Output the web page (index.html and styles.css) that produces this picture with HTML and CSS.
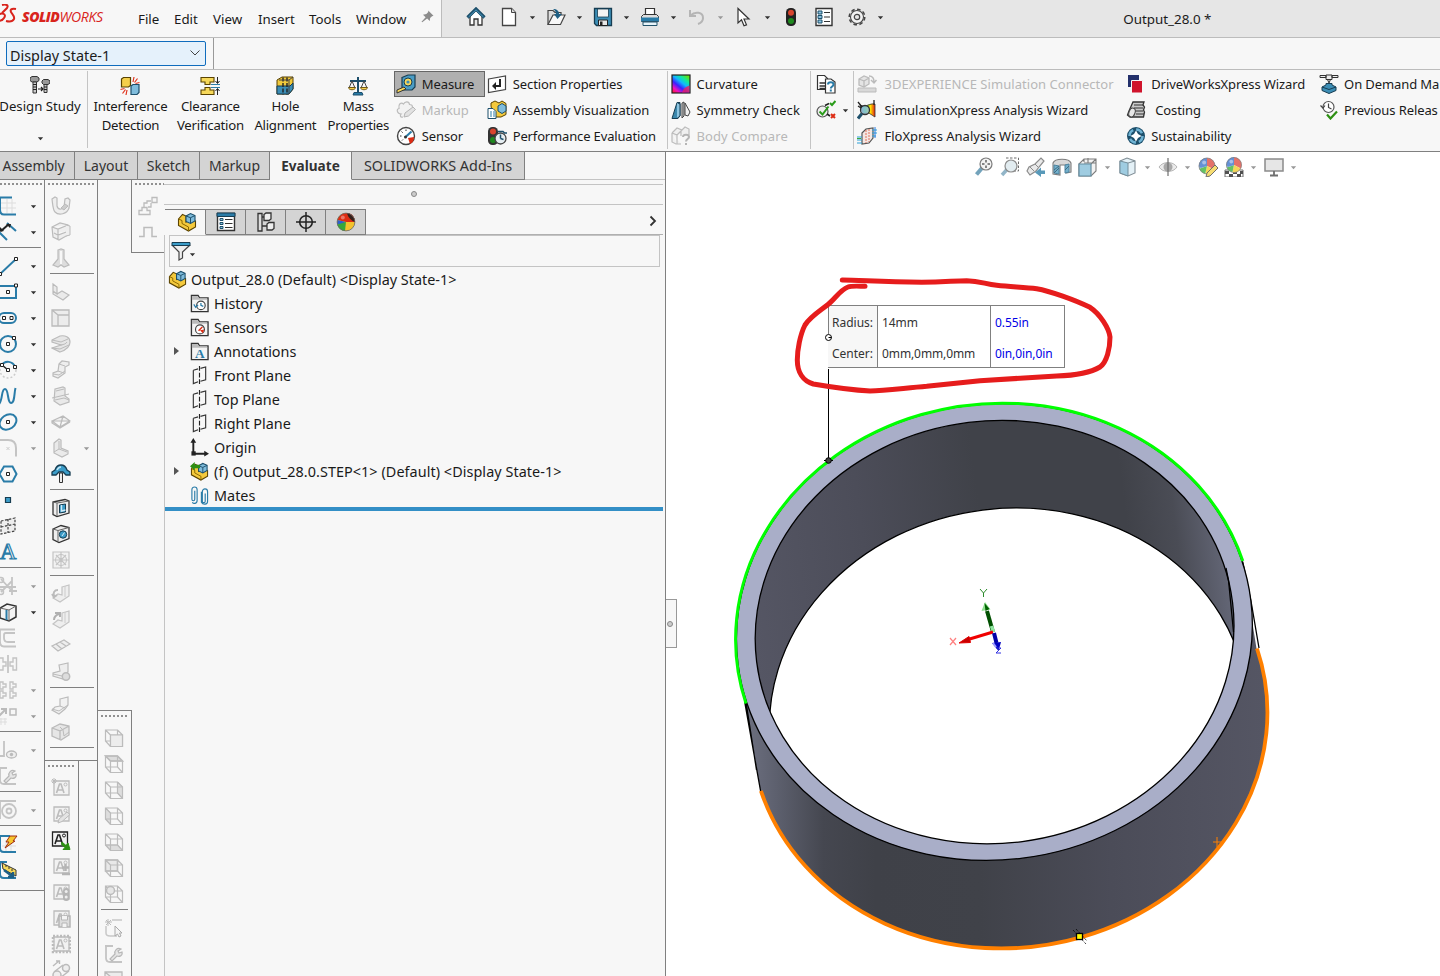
FILE: index.html
```html
<!DOCTYPE html>
<html lang="en">
<head>
<meta charset="utf-8">
<title>SOLIDWORKS - Output_28.0</title>
<link rel="stylesheet" href="styles.css">
</head>
<body>
<svg class="defs" width="0" height="0" aria-hidden="true">
<defs>
<linearGradient id="wallOut" gradientUnits="userSpaceOnUse" x1="745" y1="0" x2="1268" y2="0"><stop offset="0" stop-color="#6d7080"/><stop offset=".06" stop-color="#5d606e"/><stop offset=".15" stop-color="#454750"/><stop offset=".25" stop-color="#3f4148"/><stop offset=".45" stop-color="#404249"/><stop offset=".7" stop-color="#4b4c58"/><stop offset="1" stop-color="#555664"/></linearGradient>
<linearGradient id="wallIn" gradientUnits="userSpaceOnUse" x1="755" y1="0" x2="1235" y2="0"><stop offset="0" stop-color="#555664"/><stop offset=".25" stop-color="#4c4d59"/><stop offset=".5" stop-color="#404249"/><stop offset=".8" stop-color="#404249"/><stop offset=".9" stop-color="#4a4c55"/><stop offset="1" stop-color="#646777"/></linearGradient>
<linearGradient id="hue" x1="0" y1="1" x2=".8" y2="0"><stop offset="0" stop-color="#ff2010"/><stop offset=".22" stop-color="#f010c0"/><stop offset=".42" stop-color="#3a20ff"/><stop offset=".62" stop-color="#10b8ff"/><stop offset=".8" stop-color="#10e8a0"/><stop offset="1" stop-color="#60e010"/></linearGradient>
<linearGradient id="rain" x1="0" y1="0" x2="1" y2="0"><stop offset="0" stop-color="#2b50e0"/><stop offset=".35" stop-color="#20c040"/><stop offset=".7" stop-color="#ffe000"/><stop offset="1" stop-color="#e02010"/></linearGradient>
<clipPath id="bore"><ellipse cx="994.600" cy="632.100" rx="239.800" ry="211.300" transform="rotate(-7.100 994.600 632.100)"/></clipPath>
<symbol id="home" viewBox="0 0 20 20"><path d="M4 9v9h4v-6h4v6h4V9l-6-6z" fill="#fff" stroke="#333" stroke-width="1.3"/><path d="M1.5 10.5 10 2l8.5 8.500" fill="none" stroke="#1d4f6b" stroke-width="3.200"/><path d="M2.500 10 10 2.800l7.500 7.200" fill="none" stroke="#4a9cc4" stroke-width="1"/></symbol>
<symbol id="doc" viewBox="0 0 20 20"><path d="M3.500 1.500h9l4 4v13h-13z" fill="#fff" stroke="#444" stroke-width="1.300"/><path d="M12.500 1.500v4h4" fill="#ddd" stroke="#444"/></symbol>
<symbol id="open" viewBox="0 0 20 20"><path d="M2 17.500V3.500h5l2 2h6v4" fill="#ddd" stroke="#444" stroke-width="1.200"/><path d="M2 17.500 7 8h12l-4.500 9.500z" fill="#f8f8f8" stroke="#444" stroke-width="1.200"/><path d="M7 2c4 0 6 2 6 5h3l-4.500 5L8 7h2c0-2-1-4-3-5z" fill="#1f5f83"/></symbol>
<symbol id="save" viewBox="0 0 20 20"><path d="M1.500 1.500h17v17h-15l-2-2z" fill="#3b8db5" stroke="#173d52" stroke-width="1.300"/><path d="M4.500 2h11v8h-11z" fill="#f3f3f3" stroke="#173d52" stroke-width=".8"/><path d="M5.500 13h9v5.500h-9z" fill="#e8e8e8" stroke="#222"/><path d="M7 14.500h2.500v4H7z" fill="#222"/></symbol>
<symbol id="print" viewBox="0 0 20 20"><path d="M5.500 8V1.500h9V8" fill="#fff" stroke="#333" stroke-width="1.200"/><path d="M1.500 9.500l2-2h13l2 2v5h-17z" fill="#ddd" stroke="#333"/><path d="M1 10.500h18v4H1z" fill="#2a7ca8"/><path d="M3 15h14v3.500H3z" fill="#e8f4fa" stroke="#23536b"/></symbol>
<symbol id="undo" viewBox="0 0 20 20"><path d="M3 3v6h6M3.500 8.500C8 4 16 5 16 11c0 3-2 5-5 6" fill="none" stroke="#b5b5b5" stroke-width="2"/></symbol>
<symbol id="cursor" viewBox="0 0 20 20"><path d="M4 1.500v14.500l3.500-3.200 2.500 6 2.500-1-2.500-5.800h5z" fill="#fff" stroke="#333" stroke-width="1.200"/></symbol>
<symbol id="light" viewBox="0 0 20 20"><rect x="5" y="1" width="10" height="18" rx="4.500" fill="#222"/><circle cx="10" cy="5.800" r="3" fill="#d8442e"/><circle cx="10" cy="14" r="3" fill="#1e8a1e"/></symbol>
<symbol id="list" viewBox="0 0 20 20"><path d="M2 1.500h16v17H2z" fill="#fff" stroke="#333" stroke-width="1.400"/><path d="M4 4h4v3H4zM4 8.500h4v3H4zM4 13h4v3H4z" fill="#8cc4e0" stroke="#1d4f6b"/><path d="M10 5.500h6M10 10h6M10 14.500h6" stroke="#333" stroke-width="1.200"/></symbol>
<symbol id="props" viewBox="0 0 20 20"><path d="M1.500 1.500h17v17h-17z" fill="#fff" stroke="#333" stroke-width="1.400"/><path d="M1 1h18v3.500H1z" fill="#2a7ca8" stroke="#173d52"/><path d="M4 6.500h3v2H4zM4 10.500h3v2H4zM4 14.500h3v2H4z" fill="#8cc4e0" stroke="#1d4f6b"/><path d="M9 7.500h7.500M9 11.500h7.500M9 15.500h7.500" stroke="#333" stroke-width="1.200"/></symbol>
<symbol id="gear" viewBox="0 0 20 20"><circle cx="10" cy="10" r="7.800" fill="none" stroke="#444" stroke-width="1.500" stroke-dasharray="3.600 2.500"/><circle cx="10" cy="10" r="6.500" fill="#f2f2f2" stroke="#444" stroke-width="1.100"/><circle cx="10" cy="10" r="2.700" fill="#e6e6e6" stroke="#444" stroke-width="1.200"/></symbol>
<symbol id="pin" viewBox="0 0 20 20"><path d="M11 2l7 7-2 .5-2.500 2.500-.5 4-3.500-3.500L3 17.500 2 17l5.500-6L4 7.500l4.500-.7L11 4z" fill="#8c8c8c"/></symbol>
<symbol id="down" viewBox="0 0 8 5"><path d="M1 1h6L4 4.500z" fill="currentColor"/></symbol>
<symbol id="bolts" viewBox="0 0 20 20"><path d="M0 2l2-1.500h5L9 2v2.500L7 6H2L0 4.500zM12 5l1.500-1.500h4.500L20 5v2l-2 1.500h-4.500L12 7z" fill="#999" stroke="#333"/><path d="M3 6h3.500v11H3zM14 8.500h3v8h-3z" fill="#ccc" stroke="#333"/><path d="M3 8.500h3.500M3 11h3.500M3 13.500h3.500M14 11h3M14 13.500h3M8 13h5M11 11l2 2-2 2" stroke="#222" stroke-width="1.200" fill="none"/></symbol>
<symbol id="interf" viewBox="0 0 20 20"><path d="M1.500 3l2-1.500h7v8l-2 1.500h-7z" fill="#f4cf4b" stroke="#5a4300" stroke-width="1.200"/><path d="M11 10l2-1.500h6v8l-2 2h-6z" fill="#7fbcdc" stroke="#1d4f6b" stroke-width="1.200"/><path d="M13 6l1-5M14.500 6.500l3-4M15.500 7.500l4-1M7 14l-1 5M5.500 13.500l-3 4M4.500 12.500l-4 1" stroke="#e0331d" stroke-width="1.200"/></symbol>
<symbol id="clear" viewBox="0 0 20 20"><path d="M1 1.500h13V6h-4v2.500H5V6H1zM1 18.500h13V14h-4v-2.500H5V14H1z" fill="#f6d85a" stroke="#5a4300" stroke-width="1.100"/><path d="M11 8.500h9M11 11.500h9" stroke="#2a7ca8"/><path d="M17.500 1v6m-2-2 2 2.500L19.500 5M17.500 19v-6m-2 2 2-2.500 2 2.500" stroke="#222" fill="none"/></symbol>
<symbol id="hole" viewBox="0 0 20 20"><path d="M2 4l5-3h11v12l-4 5H2z" fill="#f0c93c" stroke="#5a4300"/><path d="M2 10h13l3-3v6l-4 5H2z" fill="#3b8db5" stroke="#173d52"/><path d="M8 1.500v17M12 1.500v17" stroke="#222" stroke-width="1.400" stroke-dasharray="4 1.500"/><path d="M4 4h10l4-3M14 4v14" stroke="#444" fill="none"/></symbol>
<symbol id="scale" viewBox="0 0 20 20"><path d="M2 5h16M10 1v15" stroke="#1d4f6b" stroke-width="2"/><path d="M6 16.500h8l1 2.500H5z" fill="#2a7ca8" stroke="#1d4f6b"/><path d="M4 5L1 12h6zM16 5l-3 7h6z" fill="none" stroke="#444"/><path d="M.5 11.500h7c0 3-7 3-7 0zM12.500 11.500h7c0 3-7 3-7 0z" fill="#f4cf4b" stroke="#5a4300" stroke-width=".8"/></symbol>
<symbol id="tape" viewBox="0 0 20 20"><path d="M6 3.500l6-2.500h7v12l-3 3H6z" fill="#4a9cc4" stroke="#173d52" stroke-width="1.200"/><circle cx="12" cy="8" r="4" fill="#f6d85a" stroke="#173d52"/><circle cx="12" cy="8" r="1.600" fill="#3b8db5"/><path d="M8 13l-7 3v3l9-4z" fill="#f6d85a" stroke="#333"/></symbol>
<symbol id="markup" viewBox="0 0 20 20"><path d="M7 17c-3 1-3-2-2-3-4 0-5-5-2-5.500C2 4 5 2 7.500 4 9 1 13 1 13.500 4.500c2 0 3 1 3 2.500" fill="#f2f2f2" stroke="#bcbcbc" stroke-width="1.200"/><path d="M8 17l1-4 8-6 2.500 2.500-7 6.500z" fill="#e2e2e2" stroke="#b5b5b5"/></symbol>
<symbol id="sensor" viewBox="0 0 20 20"><circle cx="10" cy="10" r="8.500" fill="#fff" stroke="#444" stroke-width="1.400"/><path d="M18 11c0 4-2 6-4 7l-2-6z" fill="#dd2c14"/><path d="M4 10h1.500M5.500 5.500l1.200 1.200M10 3.500V5M6 14.500l1-1" stroke="#333"/><path d="M9 11.500l6.500-6" stroke="#2a7ca8" stroke-width="2"/><circle cx="9.500" cy="11" r="1.500" fill="#333"/></symbol>
<symbol id="section" viewBox="0 0 20 20"><path d="M1.500 5l17-3v13.500l-17 3z" fill="#fff" stroke="#444" stroke-width="1.200"/><path d="M12 5v6H9V8l-4 4 4 4v-3h5V5z" fill="#222"/></symbol>
<symbol id="asmvis" viewBox="0 0 20 20"><path d="M4 6V3l4-2 4 2 3-2 4 2.500v11L14 17H6z" fill="#f4c93c" stroke="#5a4300"/><path d="M11 6l4-2.500L19 6v5l-4 2.500L11 11z" fill="#7fbcdc" stroke="#1d4f6b"/><path d="M1 8.500h5l3 3v7H1z" fill="#fff" stroke="#1d4f6b"/><path d="M3 12h2M6 12h2M3 14h2M6 14h2M3 16h2M6 16h2" stroke="#2a7ca8"/></symbol>
<symbol id="perf" viewBox="0 0 20 20"><rect x="1" y="1" width="10" height="18" rx="4.500" fill="#333"/><circle cx="6" cy="5.500" r="3" fill="#d8442e"/><circle cx="6" cy="14" r="3" fill="#1e8a1e"/><circle cx="13.500" cy="12.500" r="5.500" fill="#e6eef2" stroke="#444" stroke-width="1.300"/><path d="M13.500 12.500V8.500M13.500 12.500l3 1M11 5.500h5l1.500 1.500H20" stroke="#1d4f6b" stroke-width="1.500" fill="none"/></symbol>
<symbol id="curv" viewBox="0 0 20 20"><rect x="1" y="1" width="18" height="18" fill="url(#hue)" stroke="#222" stroke-width="1.200"/><path d="M11 18.500c1-4 4-6 7.500-7v7z" fill="#f01a60" opacity=".8"/></symbol>
<symbol id="sym" viewBox="0 0 20 20"><path d="M1 18.500l5-16h3v13l-2 3z" fill="#3b88ad" stroke="#173d52"/><path d="M6 2.500l3 1.500v12l-3 2.500" fill="#8cc4e0" stroke="#173d52"/><path d="M11 3l2-1v14l-2 2z" fill="#ccc" stroke="#444"/><path d="M14 3l5 9-2 4-3-1z" fill="#f0f0f0" stroke="#444"/></symbol>
<symbol id="bodyq" viewBox="0 0 20 20"><path d="M1 7l5-5 5 2 3-3 4 2v6M1 7v9l4 2h5M1 7l5 2v9M6 9l5-5M10 5v5" fill="#f0f0f0" stroke="#bcbcbc" stroke-width="1.200"/><path d="M12 11c0-3 6-3 6 0 0 2-3 2-3 4.500M15 17v2" fill="none" stroke="#b5b5b5" stroke-width="2"/></symbol>
<symbol id="docq" viewBox="0 0 20 20"><path d="M1.500 1.500h7l3 3v11h-10z" fill="#fff" stroke="#333" stroke-width="1.200"/><path d="M9.500 5h5.500l4 3v11h-9.500z" fill="#fff" stroke="#333" stroke-width="1.200"/><path d="M3.500 9h6M3.500 12h6M3.500 14.500h6" stroke="#333" stroke-width="1.400"/><path d="M12 10.500c0-3 5.500-3 5.500 0 0 2-2.700 2-2.700 4M14.800 15.500v2" fill="none" stroke="#2a7ca8" stroke-width="2"/></symbol>
<symbol id="chk" viewBox="0 0 20 20"><circle cx="6.500" cy="11.500" r="5.500" fill="#eee" stroke="#555" stroke-width="1.200"/><path d="M3.500 11.500l3 3 6-8M14 3l2 2 3.500-4" fill="none" stroke="#2a9c1a" stroke-width="2"/><path d="M9 5.500l4-2M11 14l3 2" stroke="#222" stroke-width="1.600"/><path d="M15 14l4 4m0-4l-4 4" stroke="#dd2c14" stroke-width="2"/></symbol>
<symbol id="dxp" viewBox="0 0 20 20"><path d="M2 5l5-3 5 2v6l-5 3-5-2zM2 5l5 2v6M7 7l5-3" fill="#e4e4e4" stroke="#bbb" stroke-width="1.300"/><path d="M1 14h18v4H1z" fill="#d8d8d8" stroke="#bbb"/><path d="M12 2c4 0 5 2 5 6m-3-2l3 3 2.500-3" fill="none" stroke="#bbb" stroke-width="1.500"/></symbol>
<symbol id="simx" viewBox="0 0 20 20"><path d="M3 5c6 3 9-2 15-1v13c-4-2-6-6-12-3z" fill="url(#rain)" stroke="#333" stroke-width=".8"/><circle cx="8" cy="10" r="4.500" fill="#9fc8e4" fill-opacity=".8" stroke="#333" stroke-width="1.300"/><path d="M5 13.500L1 18.500" stroke="#1d4f6b" stroke-width="3"/><path d="M1 2l4 5M1 6l3 2M17 0v5" stroke="#222" stroke-width="1.300"/></symbol>
<symbol id="flox" viewBox="0 0 20 20"><path d="M5 7l4-4 7-1v10l-4 5-7 1z" fill="#f3e6e2" stroke="#555" stroke-width="1.200"/><path d="M9 4v13M12 3v13" stroke="#e0705a" stroke-dasharray="2 1"/><path d="M0 11h5M0 14h5M0 17h5M15 4h5M15 7h5M15 10h4" stroke="#2aa0d8" stroke-width="1.200"/><path d="M0 12.500h4" stroke="#3aa83a"/><path d="M18 1v11" stroke="#2a7ce0"/></symbol>
<symbol id="dwx" viewBox="0 0 20 20"><path d="M2 1h11v12H2z" fill="#23306b"/><path d="M5.500 6.500h11V19h-11z" fill="#d0142c" stroke="#f7f7f7"/></symbol>
<symbol id="cost" viewBox="0 0 20 20"><path d="M7 2h11l-1 3 1.500 2-1 3 1 2-1 5H4l-2.500-2L3 11z" fill="#c9c9c9" stroke="#333" stroke-width="1.300"/><path d="M8 5h9M8 8h9M9 11h8M10 14h8" stroke="#333" stroke-width="1.200"/><ellipse cx="6" cy="12.500" rx="3" ry="4.500" transform="rotate(20 6 12.500)" fill="#e8e8e8" stroke="#444"/></symbol>
<symbol id="sust" viewBox="0 0 20 20"><circle cx="10" cy="10" r="9" fill="#1d4f6b"/><circle cx="10" cy="10" r="6.500" fill="none" stroke="#6fb3d4" stroke-width="2.500" stroke-dasharray="7 3"/><path d="M10 4.500l2 3.500 3.500 2-3.500 2-2 3.500L8 12l-3.500-2L8 8z" fill="#fff"/></symbol>
<symbol id="odm" viewBox="0 0 20 20"><path d="M1 1.500h6v2H1zM13 1.500h6v2h-6zM7 1h6v4.500H7zM8.500 5.500h3L10 9z" fill="#eee" stroke="#333"/><path d="M3 13l4-2V9.500h6V11l4 2v3.500L10 19.500 3 16.500z" fill="#3b8db5" stroke="#173d52"/><path d="M3 13l7 2.500 7-2.500" stroke="#173d52" fill="none"/></symbol>
<symbol id="prev" viewBox="0 0 20 20"><circle cx="9.500" cy="7" r="5.500" fill="#fff" stroke="#555" stroke-width="1.200"/><path d="M9.500 3.500v4l3 1.500M1.500 5.500L4 8l2-2.500" fill="none" stroke="#444" stroke-width="1.200"/><path d="M8 14.500l3.500 4L18 11.500" fill="none" stroke="#2d8f12" stroke-width="2.200"/></symbol>
<symbol id="asm" viewBox="0 0 20 20"><path d="M1.500 7l4-4.500L9 4v6l6-3 3.500 2v6l-7 4-10-5.500z" fill="#f4c93c" stroke="#5a4300" stroke-width="1.100"/><path d="M1.500 7l3.500 1.500v3l6.500 3.500M11.500 15v4" fill="none" stroke="#8a6800"/><path d="M9 4l4.500-2.500L18 3.500V9l-4.500 2.500L9 9.500z" fill="#7fbcdc" stroke="#1d4f6b" stroke-width="1.100"/><path d="M9 4l4.500 1.700L18 3.500M13.500 5.700v5.800" fill="none" stroke="#1d4f6b"/></symbol>
<symbol id="config" viewBox="0 0 20 20"><path d="M2 1.500h4v17.500H2zM6 5h3M6 14h5" stroke="#333" fill="#ddd" stroke-width="1.300"/><path d="M8 2.500l2-1.500h5v6l-2 1.500H8zM11 12l2-1.500h5v6L16 18h-5z" fill="#eee" stroke="#333" stroke-width="1.300"/></symbol>
<symbol id="target" viewBox="0 0 20 20"><circle cx="10" cy="10" r="6.300" fill="none" stroke="#222" stroke-width="1.600"/><path d="M10 0v20M0 10h20" stroke="#222" stroke-width="1.500"/></symbol>
<symbol id="ball" viewBox="0 0 20 20"><path d="M10 10V1a9 9 0 0 0-9 9c0 1 0 2 .5 3z" fill="#8ab4dc"/><path d="M10 10V1a9 9 0 0 1 9 9 9 9 0 0 1-1 4z" fill="#e05a50"/><path d="M10 10l8 4a9 9 0 0 1-10 4.500z" fill="#f4d03c"/><path d="M10 10L8 18.500A9 9 0 0 1 1.500 13z" fill="#4ab84a"/><path d="M1 10a9 9 0 0 1 9-9v9L3 12z" fill="#4a7ed0"/><circle cx="6.800" cy="6" r="2.200" fill="#fff" opacity=".45"/><circle cx="10" cy="10" r="8.900" fill="none" stroke="#666" stroke-width=".8"/></symbol>
<symbol id="ball2" viewBox="0 0 20 20"><circle cx="10" cy="10" r="9" fill="#f4c22c"/><path d="M10 10L1.500 8a9 9 0 0 1 9.500-7c5 0 8 4 8 9z" fill="#dd2c14"/><path d="M1.500 8l8.500 2-5 2.500H1.300c-.4-2 0-3 .2-4.500z" fill="#2d5fd0"/><path d="M10 10l-8.700 2.500C2 16 5 19 9 19z" fill="#38a838"/><path d="M11 1c4 0 8 4 8 9-3-1-7-4-8-9z" fill="#35201c"/><circle cx="6.800" cy="5.500" r="2" fill="#fff" opacity=".35"/><circle cx="10" cy="10" r="8.900" fill="none" stroke="#666" stroke-width=".8"/></symbol>
<symbol id="funnel" viewBox="0 0 20 20"><path d="M1.500 4.500L8 11v8l3.500-2v-6L18.500 4.500z" fill="#eee" stroke="#444" stroke-width="1.200"/><path d="M1 1.500h18v3H1z" fill="#3b9cc8" stroke="#173d52"/></symbol>
<symbol id="folder" viewBox="0 0 20 20"><path d="M1.500 18.500V1.500h7l1.500 2.500h9v14.500z" fill="#f4f4f4" stroke="#333" stroke-width="1.400"/><path d="M2 2h6l1.500 2.500H18V6H2z" fill="#bbb"/></symbol>
<symbol id="plane" viewBox="0 0 20 20"><path d="M3.500 4.500L8.500 3M8.500 16.500l-5 2V4.500M11 2.500L16.500 1v13.500L11 16" fill="none" stroke="#333" stroke-width="1.200"/><path d="M10 0v20" stroke="#222" stroke-width="1.200" stroke-dasharray="5 2"/></symbol>
<symbol id="origin" viewBox="0 0 20 20"><path d="M3.500 4v12.500H16" fill="none" stroke="#222" stroke-width="2"/><path d="M3.500 0l3 5h-6zM20 16.500l-5 3v-6z" fill="#222"/><rect x="1.500" y="14" width="4.500" height="4.500" fill="#222"/></symbol>
<symbol id="mates" viewBox="0 0 20 20"><path d="M6 5v9c0 2-3 2-3 0V4c0-4 5.500-4 5.500 0v11c0 4-4 4-5 2" transform="translate(-1 0)" fill="none" stroke="#2a7ca8" stroke-width="1.200"/><path d="M16.500 8v8c0 2-3 2-3 0V6c0-4 5.500-4 5.500 0v10c0 4-5 4-6.500 1V6" transform="translate(-.5 0)" fill="none" stroke="#2a7ca8" stroke-width="1.200"/></symbol>
<!-- sketch tools -->
<symbol id="s-sketch" viewBox="0 0 20 20"><path d="M9 3v14M14 3v14M2 7h16M2 12h16" stroke="#ddd"/><path d="M2 1.500h12M2 1.500v12c0 3 1 5 4 5h12" stroke="#2a7ca8" stroke-width="2" fill="none"/></symbol>
<symbol id="s-dim" viewBox="0 0 20 20"><path d="M0 9l9 9M9 1l9 8" stroke="#2a7ca8" stroke-width="2"/><path d="M3 9l8-7" stroke="#222" stroke-width="2"/><path d="M1 10l1-5 4 4zM13 2l-5 0 4 4z" fill="#222"/></symbol>
<symbol id="s-line" viewBox="0 0 20 20"><path d="M2 18L18 3" stroke="#2a7ca8" stroke-width="2"/><path d="M16.500 1.500h3v3h-3zM.500 16.500h3v3h-3z" fill="#fff" stroke="#222"/></symbol>
<symbol id="s-rect" viewBox="0 0 20 20"><path d="M1 4h17v12H1z" fill="none" stroke="#2a7ca8" stroke-width="2"/><path d="M16.500 2h3v3h-3zM8.500 8.500h3v3h-3z" fill="#fff" stroke="#222"/></symbol>
<symbol id="s-slot" viewBox="0 0 20 20"><rect x="1" y="5" width="17" height="10" rx="5" fill="none" stroke="#2a7ca8" stroke-width="2"/><path d="M4.500 8.500h3v3h-3zM12 8.500h3v3h-3z" fill="#fff" stroke="#222"/></symbol>
<symbol id="s-circ" viewBox="0 0 20 20"><circle cx="10" cy="10" r="8" fill="none" stroke="#2a7ca8" stroke-width="2"/><path d="M14.500 2.500h3v3h-3zM8.500 8.500h3v3h-3z" fill="#fff" stroke="#222"/></symbol>
<symbol id="s-arc" viewBox="0 0 20 20"><circle cx="10" cy="10" r="8" fill="none" stroke="#ccc" stroke-width="1.500" stroke-dasharray="2 2"/><path d="M4 5c3-5 11-4 13 2" fill="none" stroke="#2a7ca8" stroke-width="2"/><path d="M4 5l6 5" stroke="#222" stroke-width="1.500"/><path d="M2.500 3.500h3v3h-3zM15.500 5.500h3v3h-3zM8.500 8.500h3v3h-3z" fill="#fff" stroke="#222"/></symbol>
<symbol id="s-spl" viewBox="0 0 20 20"><path d="M1 18C5 14 3 3 7 3s2 14 6 14 3-10 4.500-15" fill="none" stroke="#2a7ca8" stroke-width="2"/></symbol>
<symbol id="s-ell" viewBox="0 0 20 20"><ellipse cx="10" cy="10" rx="9" ry="7" transform="rotate(-35 10 10)" fill="none" stroke="#2a7ca8" stroke-width="2"/><path d="M8.500 8.500h3v3h-3z" fill="#fff" stroke="#222"/></symbol>
<symbol id="s-fil" viewBox="0 0 20 20"><path d="M0 2h10c5 0 8 3 8 8v8.500" fill="none" stroke="#c4c4c4" stroke-width="2"/><path d="M8.500 9l3 3m0-3l-3 3" stroke="#ccc"/></symbol>
<symbol id="s-hex" viewBox="0 0 20 20"><path d="M6 2.500h8.500L18.500 10l-4 7.500H6L1.500 10z" fill="none" stroke="#2a7ca8" stroke-width="2"/><path d="M8.500 8.500h3v3h-3z" fill="#fff" stroke="#222"/></symbol>
<symbol id="s-pt" viewBox="0 0 20 20"><path d="M7.500 7.500h5v5h-5z" fill="#3b9cc8" stroke="#173d52" stroke-width="1.200"/></symbol>
<symbol id="s-pl" viewBox="0 0 20 20"><path d="M3 5l14-3v13L3 18zM10 3v14M3 11l14-3" fill="#eee" stroke="#444" stroke-width="1.200" stroke-dasharray="2.500 1.500"/></symbol>
<symbol id="s-trim" viewBox="0 0 20 20"><path d="M3 3l11 12M3 16L14 5M14 1v18M0 11h18M11 15h8" stroke="#c4c4c4" stroke-width="1.800"/><circle cx="3" cy="4" r="2.500" fill="none" stroke="#c4c4c4" stroke-width="1.500"/><circle cx="3" cy="16" r="2.500" fill="none" stroke="#c4c4c4" stroke-width="1.500"/></symbol>
<symbol id="s-conv" viewBox="0 0 20 20"><path d="M2 6l7-4 9 2v11l-7 4-9-3z" fill="#f4f4f4" stroke="#333" stroke-width="1.500"/><path d="M2 6l9 2 7-4M11 8v11" fill="none" stroke="#666"/><path d="M8.500 8v10" stroke="#2a7ca8" stroke-width="2"/></symbol>
<symbol id="s-off" viewBox="0 0 20 20"><path d="M1 1.500h16M2 1.500v12c0 3 1 5 4 5h12M17 5H8c-2 0-2 1-2 3v2c0 3 1 4 4 4h7" fill="none" stroke="#c4c4c4" stroke-width="1.800"/></symbol>
<symbol id="s-mir" viewBox="0 0 20 20"><path d="M10 1v18" stroke="#bbb" stroke-width="1.500"/><path d="M1 4h4v4h3v4H5v4H1M18.500 4H15v4h-3v4h3v4h3.500z" fill="none" stroke="#c4c4c4" stroke-width="1.400"/></symbol>
<symbol id="s-pat" viewBox="0 0 20 20"><path d="M2 2h3v2h3v3H5v2H2zM12 2h3v2h3v3h-3v2h-3zM2 11h3v2h3v3H5v2H2zM12 11h3v2h3v3h-3v2h-3z" fill="none" stroke="#c4c4c4" stroke-width="1.400"/></symbol>
<symbol id="s-mov" viewBox="0 0 20 20"><path d="M12 3h6v6h-6z" fill="none" stroke="#bbb" stroke-width="1.500"/><path d="M1 10l6-6M3 3h5v5" stroke="#bbb" stroke-width="2" fill="none"/><path d="M1 13h8M1 16h8M3 12v7M7 12v7" stroke="#ddd"/></symbol>
<symbol id="s-rel" viewBox="0 0 20 20"><path d="M6 1v15H0" fill="none" stroke="#c4c4c4" stroke-width="1.800"/><ellipse cx="13.500" cy="14.500" rx="5" ry="3.500" fill="#eee" stroke="#bbb" stroke-width="1.300"/><circle cx="13.500" cy="14.500" r="1.700" fill="#bbb"/></symbol>
<symbol id="s-rep" viewBox="0 0 20 20"><path d="M1 2h8M5 18h13M2 2v12c0 3 1 4 4 4" fill="none" stroke="#c4c4c4" stroke-width="1.800"/><path d="M6 15l5-5c-1-3 2-7 6-5l-3 2 1 2 3-1c1 4-3 5-5 4l-5 5z" fill="#e6e6e6" stroke="#b8b8b8" stroke-width="1.200"/></symbol>
<symbol id="s-cc" viewBox="0 0 20 20"><path d="M1 1h17M2 1v18" stroke="#c4c4c4" stroke-width="1.800"/><circle cx="11" cy="11" r="7" fill="none" stroke="#c4c4c4" stroke-width="1.800"/><circle cx="11" cy="11" r="2.500" fill="none" stroke="#c4c4c4" stroke-width="1.800"/></symbol>
<symbol id="s-rapid" viewBox="0 0 20 20"><path d="M8 6v12M13 6v12M4 12h14" stroke="#ddd"/><path d="M2 2h10M2 2v12c0 3 1 4 4 4h12" stroke="#2a7ca8" stroke-width="2" fill="none"/><path d="M12 2h7l-4 5h2l-10 7 4-6H8z" fill="#f6c62c" stroke="#a02a10"/></symbol>
<symbol id="s-inst" viewBox="0 0 20 20"><path d="M2 2h7M2 2v12c0 3 1 4 4 4h12" stroke="#2a7ca8" stroke-width="2" fill="none"/><path d="M4 3l14 7v6L5 9z" fill="#f6d85a" stroke="#333"/><path d="M8 5v2M11 7v2M14 9v2" stroke="#333"/><path d="M6 10l8 6M15 12v5h-5" stroke="#1d5f86" stroke-width="2.500" fill="none"/></symbol>
<!-- sheet metal tools -->
<symbol id="m1" viewBox="0 0 20 20"><path d="M1 3l3-2 2 1v8c1 4 5 4 7 1l1-8 3-1 2 2-1 8c-2 6-10 8-14 4-2-2-2-5-3-13z" fill="#eee" stroke="#bbb" stroke-width="1.200"/><path d="M10 12l4-4 3 2-4 4z" fill="#ccc" stroke="#bbb"/></symbol>
<symbol id="m2" viewBox="0 0 20 20"><path d="M1 5l8-4 8 2v10l-9 5-6-3zM1 5l6 2 10-4M3 11l4 2 11-4M7 7v10" fill="#eee" stroke="#bbb" stroke-width="1.200"/><path d="M15 3l4 1v9l-4 1" fill="#eee" stroke="#bbb"/></symbol>
<symbol id="m3" viewBox="0 0 20 20"><path d="M7 2l3-1 3 1v9l5 6-5 2-3-2-3 2-5-2 5-6z" fill="#ddd" stroke="#bbb" stroke-width="1.200"/><path d="M10 3v13" stroke="#fff" stroke-width="1.500"/></symbol>
<symbol id="m4" viewBox="0 0 20 20"><path d="M2 2l4 3v7l-4-3zM2 9l4 3 5-3 7 4-6 5-10-6z" fill="#eaeaea" stroke="#bbb" stroke-width="1.200"/></symbol>
<symbol id="m5" viewBox="0 0 20 20"><path d="M1 2h17v16H1zM7 7h11M7 7v11M1 2l6 5" fill="#ececec" stroke="#bbb" stroke-width="1.300"/></symbol>
<symbol id="m6" viewBox="0 0 20 20"><path d="M1 6l8-4c5-1 10 1 10 6s-4 8-10 10l-8-4 9-3-9-3z" fill="#e6e6e6" stroke="#bbb" stroke-width="1.200"/><path d="M1 6l9 2 7-3M8 11c4 0 7-1 8-3M1 14l8 1 9-4" fill="none" stroke="#bbb"/></symbol>
<symbol id="m7" viewBox="0 0 20 20"><path d="M8 4l3-3 7 1v3l-4 2v6l-7 5-5-2v-3l5-2z" fill="#eee" stroke="#bbb" stroke-width="1.200"/><path d="M8 4l6 2M7 11l6 2M2 14l6 1 6-4" fill="none" stroke="#bbb"/></symbol>
<symbol id="m8" viewBox="0 0 20 20"><path d="M4 3l8-2 2 1v8l4 3v3l-9 3-6-4z" fill="#e9e9e9" stroke="#bbb" stroke-width="1.200"/><path d="M1 12l17-4M5 5l8-2M4 14l9-2 5 2" fill="none" stroke="#bbb"/></symbol>
<symbol id="m9" viewBox="0 0 20 20"><path d="M1 9l11-5 7 5-10 6zM1 9v2l8 5 10-6M12 4l-3 11M1 9l18 0" fill="#eee" stroke="#bbb" stroke-width="1.200"/></symbol>
<symbol id="m10" viewBox="0 0 20 20"><path d="M3 5l5-4 2 1v8l7 3v3l-6 3-8-4z" fill="#eaeaea" stroke="#bbb" stroke-width="1.200"/><path d="M8 3v8l-5 3M8 11l8 3" fill="none" stroke="#bbb"/></symbol>
<symbol id="m11" viewBox="0 0 20 20"><path d="M1 8l3-2C5 3 7 1 10 1s5 2 6 5l3 2v3h-4l-3-3H8l-3 3H1z" fill="#3b9cc8" stroke="#173d52" stroke-width="1.300"/><path d="M6 6c1-2 2-3 4-3" stroke="#bfe4f4" stroke-width="1.500" fill="none"/><path d="M8.500 9h3v9.500h-3z" fill="#eee" stroke="#333"/></symbol>
<symbol id="m12" viewBox="0 0 20 20"><path d="M2 4l12-2.500 4 1.500v12L6 18.500l-4-2z" fill="#eee" stroke="#333" stroke-width="1.300"/><path d="M2 4l4 1v13M6 5l12-2" stroke="#666" fill="none"/><path d="M8.500 7l6-1v8l-6 1z" fill="#3b9cc8" stroke="#173d52"/><path d="M10.500 7v6l4-1" fill="none" stroke="#cfe9f6" stroke-width="1.400"/></symbol>
<symbol id="m13" viewBox="0 0 20 20"><path d="M2 5l8-3.500 8 2v11L8 18.500l-6-3z" fill="#eee" stroke="#333" stroke-width="1.300"/><path d="M2 5l5 1.500v11M7 6.500l11-3" stroke="#666" fill="none"/><circle cx="12" cy="10.500" r="3.700" fill="#3b9cc8" stroke="#173d52"/><path d="M11 12l2.500-3.500" stroke="#e0f0fa"/></symbol>
<symbol id="m14" viewBox="0 0 20 20"><path d="M2 2h16v16H2zM2 10h16M10 2v16M5 5l10 10M15 5L5 15" fill="#f2f2f2" stroke="#c4c4c4" stroke-width="1.200"/><circle cx="10" cy="10" r="5.500" fill="none" stroke="#c4c4c4"/></symbol>
<symbol id="m15" viewBox="0 0 20 20"><path d="M11 3l7-2v11l-9 6-7-4 5-4 4 1z" fill="#eee" stroke="#c4c4c4" stroke-width="1.200"/><path d="M7 6c-4 0-5 3-4 6m-2-2l2 3 3-2" fill="none" stroke="#bbb" stroke-width="2"/><path d="M14 2v11" stroke="#ccc"/></symbol>
<symbol id="m15b" viewBox="0 0 20 20"><path d="M11 3l7-2v11l-9 6-7-4 5-4 4 1z" fill="#eee" stroke="#c4c4c4" stroke-width="1.200"/><path d="M3 10c0-3 2-5 5-6M4 3h5v4" fill="none" stroke="#b0b0b0" stroke-width="2"/><path d="M14 2v11" stroke="#ccc"/></symbol>
<symbol id="m16" viewBox="0 0 20 20"><path d="M1 10l12-6 6 4-12 7zM5 8l6 5M9 6l6 4" fill="#eee" stroke="#bbb" stroke-width="1.200"/></symbol>
<symbol id="m17" viewBox="0 0 20 20"><path d="M8 3l9-2v9l-3 2-2 5-10-3v-3l7-2z" fill="#eee" stroke="#bbb" stroke-width="1.200"/><path d="M2 12l9 2 6-4" fill="none" stroke="#bbb"/><circle cx="15" cy="14.500" r="3.700" fill="#ddd" stroke="#bbb" stroke-width="1.500"/></symbol>
<symbol id="m18" viewBox="0 0 20 20"><path d="M9 3l8-2v8l-3 4-6 5-7-4 3-3 5-1z" fill="#f2f2f2" stroke="#bbb" stroke-width="1.200"/><path d="M1 13l7 2 9-6M9 10l5 2" fill="none" stroke="#bbb"/></symbol>
<symbol id="m19" viewBox="0 0 20 20"><path d="M1 6l8-4 9 2v9l-8 5-9-4zM1 6l8 3v9M9 9l9-5" fill="#e6e6e6" stroke="#bbb" stroke-width="1.300"/><path d="M9 5l3 3 1 6 5-4" stroke="#bbb" fill="none"/></symbol>
<!-- cubes -->
<symbol id="cube" viewBox="0 0 20 20"><path d="M1.500 2h12v11h-12zM6.500 7h12v11.500h-12zM1.500 2l5 5M13.500 2l5 5M1.500 13l5 5.500M13.500 13l5 5.500" fill="none" stroke="#bcbcbc" stroke-width="1.200"/></symbol>
<symbol id="cubef" viewBox="0 0 20 20"><use href="#cube"/><path d="M6.500 7h12v11.500h-12z" fill="#ededed" stroke="#bcbcbc" stroke-width="1.200"/></symbol>
<!-- annotation tools -->
<symbol id="aframe" viewBox="0 0 20 20"><path d="M3 3h15v14H3z" fill="#f2f2f2" stroke="currentColor" stroke-width="1.300"/><path d="M5.500 15l3-9h1.500l3 9M7 12h5" fill="none" stroke="currentColor" stroke-width="1.600"/><circle cx="14.500" cy="6.500" r="1.500" fill="none" stroke="currentColor"/></symbol>
<symbol id="belt" viewBox="0 0 20 20"><circle cx="6" cy="15" r="4" fill="#eee" stroke="#bbb" stroke-width="1.500"/><circle cx="15" cy="8" r="3.500" fill="#eee" stroke="#bbb" stroke-width="1.500"/><path d="M3 12l9-7M9 18l9-7M2 6l6-5M5 1h3.500v3" stroke="#bbb" stroke-width="1.400" fill="none"/></symbol>
<symbol id="skc" viewBox="0 0 20 20"><path d="M8 2h10M2 8v7c0 2 1 3 4 3h7" stroke="#c8c8c8" fill="none" stroke-width="1.500"/><path d="M4 1v7M1 4h7M2 2l5 5M7 2L2 7" stroke="#bbb"/><path d="M11 8v10l2.500-2 1.500 3 2-1-1.500-3H18z" fill="#f4f4f4" stroke="#aaa"/></symbol>
<symbol id="blk" viewBox="0 0 20 20"><path d="M1 18.500v-4h3v-3h5v3h3v4zM6 11V7h3V5h4M14 1.500h5v5h-5zM13 7v4h-3" fill="none" stroke="#bcbcbc" stroke-width="1.300"/></symbol>
<symbol id="jog" viewBox="0 0 20 20"><path d="M1 14.500h5v-9h8v9h5" fill="none" stroke="#bcbcbc" stroke-width="1.500"/></symbol>
<!-- view tools -->
<symbol id="vfit" viewBox="0 0 20 20"><path d="M8 11L2.500 17.500" stroke="#5b93b0" stroke-width="4"/><circle cx="12" cy="7" r="6" fill="#f2f2f2" stroke="#666" stroke-width="1.200"/><path d="M12 3v2.500M12 8.500V11M8 7h2.500M13.500 7H16" stroke="#444" stroke-width="1.500"/></symbol>
<symbol id="varea" viewBox="0 0 20 20"><path d="M6 1h12.500v13H14" fill="none" stroke="#555" stroke-dasharray="2.500 1.500"/><path d="M7 12.500L2 18" stroke="#7fa9bf" stroke-width="3.500"/><circle cx="11" cy="9" r="6" fill="#dde9ee" stroke="#777" stroke-width="1.200"/></symbol>
<symbol id="vprev" viewBox="0 0 20 20"><path d="M1 14l2-4 6-3 6-6 3 3-5 6-3 4-6 4z" fill="#e6e6e6" stroke="#777" stroke-width="1.200"/><path d="M9 7l3 3M4 10l4 4" stroke="#777"/><path d="M19 13.500h-4v-3l-6 5 6 4.500v-3h4z" fill="#3b88ad"/></symbol>
<symbol id="vsec" viewBox="0 0 20 20"><path d="M1 6c2-5 16-5 18 0v9l-5 1V8H8v10l-7-1z" fill="#d2d2d2" stroke="#666" stroke-width="1.100"/><path d="M2 8l5 1v8l-5-1zM13 8l4-1v8l-4 1z" fill="#5ba3c4" stroke="#2f6f90"/><path d="M2 13l5-4M2 16l5-5M13 13l4-4" stroke="#1f536d"/></symbol>
<symbol id="vor" viewBox="0 0 20 20"><path d="M6 2h12v12l-5 5H1V7zM6 2v3M13 7l5-5M10 1v5M6 6h12" fill="#f0f0f0" stroke="#666" stroke-width="1.100"/><path d="M1 7h12v12H1z" fill="#8fc4dc" stroke="#4a7b92" stroke-width="1.200"/></symbol>
<symbol id="vsty" viewBox="0 0 20 20"><path d="M2 4l7-3 8 3v12l-7 3-8-3z" fill="#e0eff6" stroke="#6b7b84" stroke-width="1.100"/><path d="M2 4l8 2v13l-8-3z" fill="#8fc4dc" stroke="#5b7b8a"/><path d="M10 6l7-2" stroke="#6b7b84"/></symbol>
<symbol id="veye" viewBox="0 0 20 20"><path d="M1 10c4-6 14-6 18 0-4 6-14 6-18 0z" fill="#e8e8e8" stroke="#aaa"/><circle cx="10" cy="10" r="4.500" fill="#999"/><path d="M10 1v18" stroke="#555" stroke-width="1.200"/></symbol>
<symbol id="mon" viewBox="0 0 20 20"><path d="M1 2h18v12H1z" fill="#e2e2e2" stroke="#777" stroke-width="1.500"/><path d="M10 14v4M6 18.500h8" stroke="#555" stroke-width="1.800"/></symbol>
</defs>
</svg>

<div class="app">
  <header class="titlebar">
    <div class="brand">
      <svg class="ds" viewBox="0 0 18 20"><path d="M2 1c4-1 7 0 5 3L2 9M-2 11c4-3 9-1 6 3-1 2-4 3-7 3M16 5c-5-1-6 1-5 3s4 4 3 7c-1 2-4 3-8 2" fill="none" stroke="#d9241c" stroke-width="2"/></svg>
      <span class="logo"><b>SOLID</b>WORKS</span>
      <nav class="menu"><span class="m-file">File</span><span class="m-edit">Edit</span><span class="m-view">View</span><span class="m-ins">Insert</span><span class="m-tool">Tools</span><span>Window</span></nav>
      <svg class="pin"><use href="#pin"/></svg>
    </div>
    <div class="quick">
      <i class="qc"><svg><use href="#home"/></svg></i>
      <i class="qc gap"><svg><use href="#doc"/></svg></i><i class="qc"><svg class="dn"><use href="#down"/></svg></i>
      <i class="qc"><svg><use href="#open"/></svg></i><i class="qc"><svg class="dn"><use href="#down"/></svg></i>
      <i class="qc"><svg><use href="#save"/></svg></i><i class="qc"><svg class="dn"><use href="#down"/></svg></i>
      <i class="qc"><svg><use href="#print"/></svg></i><i class="qc"><svg class="dn"><use href="#down"/></svg></i>
      <i class="qc"><svg><use href="#undo"/></svg></i><i class="qc"><svg class="dn dim"><use href="#down"/></svg></i>
      <i class="qc"><svg><use href="#cursor"/></svg></i><i class="qc"><svg class="dn"><use href="#down"/></svg></i>
      <i class="qc"><svg><use href="#light"/></svg></i>
      <i class="qc gap"><svg><use href="#list"/></svg></i>
      <i class="qc gap"><svg><use href="#gear"/></svg></i><i class="qc"><svg class="dn"><use href="#down"/></svg></i>
      <span class="doctitle">Output_28.0 *</span>
    </div>
  </header>

  <div class="statebar">
    <div class="select"><span>Display State-1</span><svg viewBox="0 0 10 6"><path d="M.500.500L5 5 9.500.500" fill="none" stroke="#444"/></svg></div>
    <div class="vline"></div>
  </div>

  <div class="ribbon">
    <div class="big w1"><svg><use href="#bolts"/></svg><span>Design Study</span><svg class="dn"><use href="#down"/></svg></div>
    <div class="big w2"><svg><use href="#interf"/></svg><span>Interference<br>Detection</span></div>
    <div class="big w3"><svg><use href="#clear"/></svg><span>Clearance<br>Verification</span></div>
    <div class="big w4"><svg><use href="#hole"/></svg><span>Hole<br>Alignment</span></div>
    <div class="big w5"><svg><use href="#scale"/></svg><span>Mass<br>Properties</span></div>
    <div class="col c1">
      <div class="cmd on"><svg><use href="#tape"/></svg>Measure</div>
      <div class="cmd off"><svg><use href="#markup"/></svg>Markup</div>
      <div class="cmd"><svg><use href="#sensor"/></svg>Sensor</div>
    </div>
    <div class="col c2 rule">
      <div class="cmd"><svg><use href="#section"/></svg>Section Properties</div>
      <div class="cmd"><svg><use href="#asmvis"/></svg>Assembly Visualization</div>
      <div class="cmd"><svg><use href="#perf"/></svg>Performance Evaluation</div>
    </div>
    <div class="col c3 rule">
      <div class="cmd"><svg><use href="#curv"/></svg>Curvature</div>
      <div class="cmd"><svg><use href="#sym"/></svg>Symmetry Check</div>
      <div class="cmd off"><svg><use href="#bodyq"/></svg>Body Compare</div>
    </div>
    <div class="col c4 rule">
      <div class="cmd"><svg><use href="#docq"/></svg></div>
      <div class="cmd"><svg><use href="#chk"/></svg><svg class="dn"><use href="#down"/></svg></div>
    </div>
    <div class="col c5">
      <div class="cmd off wide"><svg><use href="#dxp"/></svg>3DEXPERIENCE Simulation Connector</div>
      <div class="cmd"><svg><use href="#simx"/></svg>SimulationXpress Analysis Wizard</div>
      <div class="cmd"><svg><use href="#flox"/></svg>FloXpress Analysis Wizard</div>
    </div>
    <div class="col c6">
      <div class="cmd"><svg><use href="#dwx"/></svg>DriveWorksXpress Wizard</div>
      <div class="cmd"><svg><use href="#cost"/></svg><span class="ind">Costing</span></div>
      <div class="cmd"><svg><use href="#sust"/></svg>Sustainability</div>
    </div>
    <div class="col c7">
      <div class="cmd"><svg><use href="#odm"/></svg>On Demand Ma</div>
      <div class="cmd"><svg><use href="#prev"/></svg>Previous Releas</div>
    </div>
  </div>

  <main class="work">
    <section class="side">
      <div class="tabs"><span class="t1">Assembly</span><span class="t2">Layout</span><span class="t3">Sketch</span><span class="t4">Markup</span><span class="t5 cur">Evaluate</span><span class="t6">SOLIDWORKS Add-Ins</span></div>
      <div class="panes">
        <div class="bar sk"><div class="grip"></div>
          <div class="tool"><svg><use href="#s-sketch"/></svg><svg class="dn"><use href="#down"/></svg></div>
          <div class="tool"><svg><use href="#s-dim"/></svg><svg class="dn"><use href="#down"/></svg></div>
          <div class="sep"></div>
          <div class="tool"><svg><use href="#s-line"/></svg><svg class="dn"><use href="#down"/></svg></div>
          <div class="tool"><svg><use href="#s-rect"/></svg><svg class="dn"><use href="#down"/></svg></div>
          <div class="tool"><svg><use href="#s-slot"/></svg><svg class="dn"><use href="#down"/></svg></div>
          <div class="tool"><svg><use href="#s-circ"/></svg><svg class="dn"><use href="#down"/></svg></div>
          <div class="tool"><svg><use href="#s-arc"/></svg><svg class="dn"><use href="#down"/></svg></div>
          <div class="tool"><svg><use href="#s-spl"/></svg><svg class="dn"><use href="#down"/></svg></div>
          <div class="tool"><svg><use href="#s-ell"/></svg><svg class="dn"><use href="#down"/></svg></div>
          <div class="tool"><svg><use href="#s-fil"/></svg><svg class="dn dim"><use href="#down"/></svg></div>
          <div class="tool"><svg><use href="#s-hex"/></svg></div>
          <div class="tool"><svg><use href="#s-pt"/></svg></div>
          <div class="tool"><svg><use href="#s-pl"/></svg></div>
          <div class="tool"><b class="ltr">A</b></div>
          <div class="sep"></div>
          <div class="tool"><svg><use href="#s-trim"/></svg><svg class="dn dim"><use href="#down"/></svg></div>
          <div class="tool"><svg><use href="#s-conv"/></svg><svg class="dn"><use href="#down"/></svg></div>
          <div class="tool"><svg><use href="#s-off"/></svg></div>
          <div class="tool"><svg><use href="#s-mir"/></svg></div>
          <div class="tool"><svg><use href="#s-pat"/></svg><svg class="dn dim"><use href="#down"/></svg></div>
          <div class="tool"><svg><use href="#s-mov"/></svg><svg class="dn dim"><use href="#down"/></svg></div>
          <div class="sep"></div>
          <div class="tool"><svg><use href="#s-rel"/></svg><svg class="dn dim"><use href="#down"/></svg></div>
          <div class="tool"><svg><use href="#s-rep"/></svg></div>
          <div class="sep"></div>
          <div class="tool"><svg><use href="#s-cc"/></svg><svg class="dn dim"><use href="#down"/></svg></div>
          <div class="sep"></div>
          <div class="tool"><svg><use href="#s-rapid"/></svg></div>
          <div class="tool"><svg><use href="#s-inst"/></svg></div>
          <div class="floor"></div>
        </div>
        <div class="bar sm"><div class="grip"></div>
          <div class="tool"><svg><use href="#m1"/></svg></div>
          <div class="tool"><svg><use href="#m2"/></svg></div>
          <div class="tool"><svg><use href="#m3"/></svg></div>
          <div class="sep"></div>
          <div class="tool"><svg><use href="#m4"/></svg></div>
          <div class="tool"><svg><use href="#m5"/></svg></div>
          <div class="tool"><svg><use href="#m6"/></svg></div>
          <div class="tool"><svg><use href="#m7"/></svg></div>
          <div class="tool"><svg><use href="#m8"/></svg></div>
          <div class="tool"><svg><use href="#m9"/></svg></div>
          <div class="tool"><svg><use href="#m10"/></svg><svg class="dn dim"><use href="#down"/></svg></div>
          <div class="tool"><svg><use href="#m11"/></svg></div>
          <div class="sep"></div>
          <div class="tool"><svg><use href="#m12"/></svg></div>
          <div class="tool"><svg><use href="#m13"/></svg></div>
          <div class="tool"><svg><use href="#m14"/></svg></div>
          <div class="sep"></div>
          <div class="tool"><svg><use href="#m15"/></svg></div>
          <div class="tool"><svg><use href="#m15b"/></svg></div>
          <div class="tool"><svg><use href="#m16"/></svg></div>
          <div class="tool"><svg><use href="#m17"/></svg></div>
          <div class="sep"></div>
          <div class="tool"><svg><use href="#m18"/></svg></div>
          <div class="tool"><svg><use href="#m19"/></svg></div>
          <div class="sep"></div>
          <div class="sub"><div class="subcol"><div class="grip"></div>
            <div class="tool"><svg viewBox="0 0 20 20"><use href="#aframe"/><path d="M3 0v6M0 3h6M1 1l4 4M5 1L1 5" stroke="#bbb"/></svg></div>
            <div class="tool"><svg viewBox="0 0 20 20"><use href="#aframe"/><path d="M7 19l1-4 8-7 3 2.500-8 7z" fill="#e4e4e4" stroke="#bbb"/></svg></div>
            <div class="tool dark"><svg viewBox="0 0 20 20"><use href="#aframe" x="-1.500" y="-1"/><path d="M11 12l4 3.500 2-2.500 2 6.500h-7l2-2-3.500-3z" fill="#2d8f12" stroke="#2d8f12"/></svg></div>
            <div class="tool"><svg viewBox="0 0 20 20"><use href="#aframe"/><path d="M14.500 8v7M11 11.500h7M11 18h8" stroke="#b5b5b5" stroke-width="2.500"/></svg></div>
            <div class="tool"><svg viewBox="0 0 20 20"><use href="#aframe"/><rect x="12" y="6" width="6.500" height="13" rx="3" fill="#b5b5b5"/><circle cx="15.200" cy="9.500" r="1.500" fill="#eee"/><circle cx="15.200" cy="15" r="1.500" fill="#eee"/></svg></div>
            <div class="tool"><svg viewBox="0 0 20 20"><use href="#aframe"/><path d="M8 8h11v11H8z" fill="#ddd" stroke="#b5b5b5" stroke-width="1.500"/><path d="M10.500 8v4h6V8M11 19v-4h5v4" fill="#f4f4f4" stroke="#b5b5b5"/></svg></div>
            <div class="tool"><svg viewBox="0 0 20 20"><use href="#aframe"/><rect x="2" y="2" width="17" height="16" fill="none" stroke="#bbb" stroke-width="2.500" stroke-dasharray="2 1.500"/></svg></div>
            <div class="tool"><svg><use href="#belt"/></svg></div>
          </div></div>
        </div>
        <div class="extra">
          <div class="topbox"><div class="grip"></div>
            <div class="tool"><svg><use href="#blk"/></svg></div>
            <div class="tool"><svg><use href="#jog"/></svg></div>
          </div>
          <div class="viewbox"><div class="grip"></div>
            <div class="tool"><svg><use href="#cubef"/></svg></div>
            <div class="tool"><svg viewBox="0 0 20 20"><path d="M1.500 2h12l5 5h-12z" fill="#ddd" stroke="#bbb" stroke-width="1.500"/><use href="#cube"/></svg></div>
            <div class="tool"><svg viewBox="0 0 20 20"><path d="M13.500 2l5 5v11.500l-5-5.500z" fill="#ddd" stroke="#bbb"/><use href="#cube"/></svg></div>
            <div class="tool"><svg viewBox="0 0 20 20"><path d="M1.500 2l5 5v11.500l-5-5.500z" fill="#ddd" stroke="#bbb"/><use href="#cube"/></svg></div>
            <div class="tool"><svg viewBox="0 0 20 20"><path d="M1.500 13h12l5 5.500h-12z" fill="#ddd" stroke="#bbb"/><use href="#cube"/></svg></div>
            <div class="tool"><svg viewBox="0 0 20 20"><path d="M1.500 2h12v11h-12z" fill="#e8e8e8" stroke="#bbb" stroke-width="1.500"/><use href="#cube"/></svg></div>
            <div class="tool"><svg viewBox="0 0 20 20"><use href="#cube"/><circle cx="6.500" cy="6.500" r="4" fill="#e6e6e6" stroke="#bbb" stroke-width="1.500"/></svg></div>
            <div class="sep"></div>
            <div class="tool"><svg><use href="#skc"/></svg></div>
            <div class="tool"><svg><use href="#s-rep"/></svg></div>
            <div class="tool"><svg><use href="#m5"/></svg></div>
          </div>
        </div>
        <div class="manager">
          <div class="split"><i></i></div>
          <div class="mtabs">
            <span class="cur"><svg><use href="#asm"/></svg></span><span><svg><use href="#props"/></svg></span><span><svg><use href="#config"/></svg></span><span><svg><use href="#target"/></svg></span><span><svg><use href="#ball2"/></svg></span>
            <svg class="more" viewBox="0 0 8 12"><path d="M1.500 1.500L6 6l-4.500 4.500" fill="none" stroke="#333" stroke-width="1.800"/></svg>
          </div>
          <div class="tree">
            <div class="filter"><svg><use href="#funnel"/></svg><svg class="dn"><use href="#down"/></svg></div>
            <div class="node root"><svg><use href="#asm"/></svg>Output_28.0 (Default) &lt;Display State-1&gt;</div>
            <div class="node"><svg viewBox="0 0 20 20"><use href="#folder"/><circle cx="11.500" cy="12" r="4.500" fill="#fff" stroke="#444" stroke-width="1.200"/><path d="M11.500 9.500V12l2.500 1M4 11l2 3 2.500-2.500" fill="none" stroke="#2a7ca8" stroke-width="1.300"/></svg>History</div>
            <div class="node"><svg viewBox="0 0 20 20"><use href="#folder"/><circle cx="10.500" cy="12" r="4.700" fill="#fff" stroke="#444" stroke-width="1.200"/><path d="M15 12l-1.500 4-3-3z" fill="#dd2c14"/><path d="M9 13.500l4-4" stroke="#dd2c14" stroke-width="1.500"/></svg>Sensors</div>
            <div class="node has"><svg viewBox="0 0 20 20"><use href="#folder"/><text x="10.300" y="17" class="fa">A</text></svg>Annotations</div>
            <div class="node"><svg><use href="#plane"/></svg>Front Plane</div>
            <div class="node"><svg><use href="#plane"/></svg>Top Plane</div>
            <div class="node"><svg><use href="#plane"/></svg>Right Plane</div>
            <div class="node"><svg><use href="#origin"/></svg>Origin</div>
            <div class="node has part"><svg viewBox="0 0 20 20"><use href="#asm"/><path d="M0 4.500L5 0v3h5.500v3.500H5V9z" fill="#2d8f12"/></svg>(f) Output_28.0.STEP&lt;1&gt; (Default) &lt;Display State-1&gt;</div>
            <div class="node"><svg><use href="#mates"/></svg>Mates</div>
            <div class="endbar"></div>
          </div>
        </div>
      </div>
    </section>

    <section class="viewport">
      <svg class="scene" viewBox="666 152 774 824">
        <path d="M744.700 700L760.700 791.500A258.400 227.900 -7.100 0 0 1256.500 648.500L1242.500 561L1000 600z" fill="url(#wallOut)"/>
        <path d="M744.700 702L760.700 791.700M746 702L756.500 770M1242.700 561.700L1251.500 604 1259 648" fill="none" stroke="#000" stroke-width="1.300"/>
        <ellipse cx="994.400" cy="632" rx="258.400" ry="227.900" transform="rotate(-7.100 994.400 632)" fill="#a9aec8" stroke="#000" stroke-width="1.300"/>
        <ellipse cx="994.600" cy="632.100" rx="239.800" ry="211.300" transform="rotate(-7.100 994.600 632.100)" fill="url(#wallIn)"/>
        <g clip-path="url(#bore)"><ellipse cx="1008.800" cy="719.700" rx="239.800" ry="211.300" transform="rotate(-7.100 1008.800 719.700)" fill="#fff" stroke="#000" stroke-width="1.300"/></g>
        <ellipse cx="994.600" cy="632.100" rx="239.800" ry="211.300" transform="rotate(-7.100 994.600 632.100)" fill="none" stroke="#000" stroke-width="1.300"/>
        <path d="M1226 568L1228.500 580 1233.500 632" fill="none" stroke="#000" stroke-width="1.300"/>
        <path d="M746 703.500A258.400 227.900 -7.100 0 1 1242.800 561" fill="none" stroke="#0f0" stroke-width="3"/>
        <path d="M1257 648.500A258.400 227.900 -7.100 0 1 760.900 790.800" fill="none" stroke="#ff8000" stroke-width="3.800"/>
        <path d="M1213 842h10M1217 837v10" stroke="#ff8000"/>
        <path d="M1073 930l13 14M1076 929l11 12" stroke="#000" stroke-dasharray="1 1"/>
        <rect x="1076.500" y="933.500" width="6" height="6" fill="#ff0" stroke="#000" stroke-width="1.300"/>
        <path d="M828.500 369v92" stroke="#000"/>
        <path d="M824 460.500h9" stroke="#000"/><circle cx="828.500" cy="460.500" r="2.800" fill="#444" stroke="#000"/>
        <path d="M993 632L987 611" stroke="#005000" stroke-width="4"/><path d="M985 602l-3.500 9 9-1.500z" fill="#8fe08f"/><path d="M984.500 603l1 8 4-2z" fill="#006000"/><path d="M991.500 626l2 6" stroke="#8fe8a0" stroke-width="3.500"/>
        <path d="M993 632L968 639.500" stroke="#f00000" stroke-width="3"/><path d="M959 643l10-6.500 1.500 6z" fill="#c80000" stroke="#e00000"/>
        <path d="M994 633l2.500 10" stroke="#0000a8" stroke-width="4"/><path d="M992 643l9-1-2.500 9z" fill="#0000c0"/><path d="M993 643l3 4" stroke="#9a9aff" stroke-width="2"/>
        <path d="M950 638l6 7M956 638l-6 7" stroke="#ff8080" stroke-width="1.200"/>
        <path d="M980 589l3.500 4v4M987 589l-3.500 4" stroke="#2c8a2c" fill="none"/>
        <path d="M996 648h5l-5 5h5" stroke="#3030e0" fill="none"/>
      </svg>
      <div class="hud">
        <i class="vc"><svg><use href="#vfit"/></svg></i><i class="vc"><svg><use href="#varea"/></svg></i><i class="vc"><svg><use href="#vprev"/></svg></i><i class="vc"><svg><use href="#vsec"/></svg></i><i class="vc"><svg><use href="#vor"/></svg></i><i class="va"><svg class="dn dim"><use href="#down"/></svg></i><i class="vc"><svg><use href="#vsty"/></svg></i><i class="va"><svg class="dn dim"><use href="#down"/></svg></i><i class="vc"><svg><use href="#veye"/></svg></i><i class="va"><svg class="dn dim"><use href="#down"/></svg></i><i class="vc"><svg viewBox="0 0 20 20"><use href="#ball" width="18" height="18"/><path d="M8 20l1-4 8-8 3 3-8 8z" fill="#f6d85a" stroke="#555"/></svg></i><i class="vc"><svg viewBox="0 0 20 20"><path d="M1 13h18v7H1z" fill="#fff" stroke="#555"/><path d="M1 14h4v3H1zM9 14h4v3H9zM5 17h4v3H5zM13 17h4v3h-4zM16 14h3v3h-3z" fill="#333"/><use href="#ball" width="17" height="17" x="1.500" y="-.5"/></svg></i><i class="va"><svg class="dn dim"><use href="#down"/></svg></i><i class="vc"><svg><use href="#mon"/></svg></i><i class="va"><svg class="dn dim"><use href="#down"/></svg></i>
      </div>
      <div class="handle"><i></i></div>
      <div class="callout">
        <span class="k">Radius:</span><span>14mm</span><span class="alt">0.55in</span>
        <span class="k">Center:</span><span>0mm,0mm,0mm</span><span class="alt">0in,0in,0in</span>
      </div>
      <svg class="scene" viewBox="666 152 774 824">
        <path d="M828.500 305v29" stroke="#808080"/><circle cx="828.500" cy="337.500" r="3" fill="#fff" stroke="#000"/><path d="M828.500 337.500h3" stroke="#000"/>
        <path d="M842.300 280C860 280 880 282 921.700 282.300 945 282 955 280.700 966.700 280.700 980 281 985 284 996.700 285.300 1012 287 1025 287 1036.700 288.700 1050 291 1075 300 1090 307.300 1100 314 1109 328 1110 337 1110 348 1107 362 1100 367 1090 373 1072 375.500 1056.700 376L980 380.700 926.700 386.300C905 388 885 391 870 391 850 390 825 386 813.300 384 803 381 797.300 372 797.300 360 797.300 350 800 335 805 325 811 316 820 311 828.300 304.300 835 299 840 290 848 287 852 285.500 860 286.300 865 286.300" fill="none" stroke="#e61c1c" stroke-width="5" stroke-linecap="round" stroke-linejoin="round"/>
      </svg>
    </section>
  </main>
</div>
</body>
</html>
```
FILE: styles.css
```css
* { box-sizing: border-box; }
body { margin: 0; width: 1440px; height: 976px; overflow: hidden; background: #f7f7f7; color: #1a1a1a; font-family: "Noto Sans", "Open Sans", sans-serif; font-size: 13px; }
.defs { position: absolute; }
svg { width: 20px; height: 20px; flex: none; overflow: hidden; }
svg.dn { width: 7px; height: 5px; color: #333; }
svg.dim { color: #999; }
i { font-style: normal; }
.app { display: flex; flex-direction: column; width: 1440px; height: 976px; }

.titlebar { display: flex; height: 38px; border-bottom: 1px solid #bcbcbc; }
.brand { display: flex; align-items: center; width: 442px; border-right: 1px solid #bcbcbc; }
.ds { width: 18px; height: 20px; margin-top: -10px; }
.logo { width: 120px; padding-left: 4px; margin-top: -4px; color: #d9241c; font-family: "Open Sans", sans-serif; font-size: 14px; font-style: italic; letter-spacing: -0.3px; }
.logo b { font-weight: 800; letter-spacing: -0.5px; }
.menu { display: flex; width: 282px; font-size: 13.3px; }
.m-file { width: 36px; }
.m-edit { width: 39px; }
.m-view { width: 45px; }
.m-ins { width: 51px; }
.m-tool { width: 47px; }
.pin { width: 15px; height: 15px; margin-top: -4px; }
.quick { flex: 1; display: flex; align-items: center; padding: 0 0 3px 22.2px; background: #e6e6e6; }
.qc { display: flex; justify-content: center; width: 23.5px; }
.qc.gap { margin-left: 9.5px; }
.doctitle { margin: 3px 0 0 231px; font-size: 13.4px; }

.statebar { display: flex; height: 32px; border-bottom: 1px solid #bcbcbc; }
.select { display: flex; align-items: center; justify-content: space-between; width: 200px; height: 25px; margin: 3px 0 0 6px; padding: 3px 5px 0 3px; border: 1px solid #0f6cbd; border-radius: 2px; background: #e5f1fb; font-size: 14.4px; }
.select svg { width: 10px; height: 6px; margin-top: -5px; }
.vline { width: 1px; margin-left: 7px; background: #999; }

.ribbon { display: flex; height: 81px; padding-top: 1px; }
.big { display: flex; flex-direction: column; align-items: center; padding-top: 5px; line-height: 19px; text-align: center; white-space: nowrap; font-size: 13.2px; letter-spacing: -0.25px; }
.big svg:first-child { margin-bottom: 1px; }
.big .dn { margin-top: 20px; }
.w1 { width: 88px; height: 77px; padding-right: 7px; border-right: 1px solid #c4c4c4; letter-spacing: 0; }
.w2 { width: 85px; }
.w3 { width: 75px; }
.w4 { width: 75px; }
.w5 { width: 71px; }
.col { height: 78px; }
.rule { border-right: 1px solid #c4c4c4; }
.cmd { display: flex; align-items: center; gap: 6px; height: 26px; padding-left: 2px; white-space: nowrap; letter-spacing: -0.1px; }
.on { border: 1px solid #666; background: #b0b0b0; padding-left: 1px; }
.off { color: #b8b8b8; }
.c1 { width: 91px; }
.c1 .cmd { gap: 6px; }
.c2 { width: 183px; }
.c2 .cmd { letter-spacing: -0.08px; }
.c2 .cmd:last-child { letter-spacing: -0.15px; }
.c3 { width: 144px; padding-left: 1px; }
.c3 .cmd { letter-spacing: 0.08px; }
.c4 { width: 43px; padding-left: 3px; }
.c4 .cmd { gap: 6px; }
.c5 { width: 270px; padding-left: 1px; }
.c5 .cmd { letter-spacing: 0; gap: 7px; }
.c5 .wide { letter-spacing: 0.05px; }
.c6 { width: 194px; }
.c6 .cmd { gap: 5px; }
.c7 { width: 122px; overflow: hidden; }
.c7 .cmd { gap: 5px; padding-left: 1px; }
.ind { padding-left: 4px; }

.work { flex: 1; display: flex; min-height: 0; border-top: 1px solid #808080; }
.side { width: 665px; display: flex; flex-direction: column; }
.tabs { display: flex; height: 28px; border-bottom: 1px solid #c4c4c4; font-size: 14px; color: #333; }
.tabs span { height: 28px; line-height: 27px; text-align: center; white-space: nowrap; background: #d4d4d4; border-right: 1px solid #808080; border-bottom: 1px solid #808080; }
.tabs .cur { background: #f7f7f7; border-bottom-color: #f7f7f7; font-weight: 700; font-size: 13.6px; }
.t1 { width: 75px; padding-right: 7px; letter-spacing: -0.1px; }
.t2 { width: 63px; }
.t3 { width: 62px; letter-spacing: 0; }
.t4 { width: 70px; }
.t5 { width: 82px; }
.t6 { width: 173px; font-size: 14.4px; }
.panes { flex: 1; display: flex; min-height: 0; }
.bar { border-right: 1px solid #808080; overflow: hidden; }
.grip { height: 2px; margin-top: 3px; margin-bottom: 8px; background: repeating-linear-gradient(90deg, #909090 0 2px, transparent 2px 4px); }
.tool { display: flex; align-items: center; height: 26px; color: #bcbcbc; }
.sep { height: 8px; padding-top: 2px; }
.sep::before { content: ""; display: block; height: 1px; background: #808080; }
.sk { width: 45px; }
.sk .grip { margin-right: 2px; }
.sk .tool svg:first-child { margin-left: -2px; margin-right: 12px; }
.sk .sep { padding-right: 3px; }
.ltr { width: 20px; margin-left: -2px; text-align: center; font-family: "Liberation Serif", serif; font-size: 23px; font-weight: 400; color: #f7f7f7; -webkit-text-stroke: 1.2px #2a7ca8; }
.floor { height: 8px; border-bottom: 1px solid #808080; }
.sm { width: 53px; }
.sm > .grip { margin-left: 3px; margin-right: 2px; }
.sm > .tool svg:first-child { margin-left: 6px; margin-right: 12px; }
.sm > .sep { padding-left: 5px; padding-right: 3px; }
.sub { height: 230px; margin-top: 7px; border-top: 1px solid #808080; }
.subcol { width: 34px; height: 230px; padding-top: 4px; border-right: 1px solid #808080; }
.sub .grip { margin: 0 4px 8px 3px; }
.sub .tool { padding-left: 6px; }
.sub .dark { color: #222; }
.extra { width: 66px; display: flex; flex-direction: column; justify-content: space-between; }
.topbox { align-self: flex-end; width: 33px; height: 73px; border-left: 1px solid #808080; border-bottom: 1px solid #808080; padding: 3px 0 0 3px; }
.topbox .grip { margin-top: 0; }
.topbox .tool { padding-left: 3px; }
.viewbox { width: 34px; height: 266px; border-top: 1px solid #808080; border-right: 1px solid #808080; overflow: hidden; padding: 1px 3px 0; }
.viewbox .tool { padding-left: 3px; }
.manager { width: 501px; display: flex; flex-direction: column; }
.split { display: flex; justify-content: center; align-items: center; height: 21px; margin: 4px 2px 0 0; padding-bottom: 1px; border-top: 1px solid #c4c4c4; border-bottom: 1px solid #c4c4c4; }
.split i, .handle i { width: 6px; height: 6px; border: 1px solid #888; border-radius: 50%; background: #ccc; }
.mtabs { display: flex; height: 26px; margin: 4px 2px 0 1px; border-bottom: 1px solid #b0b0b0; }
.mtabs span { display: flex; align-items: center; justify-content: center; width: 40px; height: 26px; background: #d4d4d4; border: solid #808080; border-width: 1px 1px 1px 0; }
.mtabs .cur { width: 41px; padding-left: 3px; background: #f7f7f7; border-bottom-color: #f7f7f7; }
.mtabs .more { width: 8px; height: 12px; margin: 6px 0 0 283px; }
.tree { flex: 1; border-left: 1px solid #c4c4c4; font-size: 14.4px; }
.filter { display: flex; align-items: center; height: 32px; margin: 0 5px 0 4px; padding-left: 1px; border: 1px solid #c4c4c4; }
.filter .dn { margin: 7px 0 0 -2px; }
.node { position: relative; display: flex; align-items: center; gap: 5px; height: 24px; padding: 1px 0 0 25px; white-space: nowrap; }
.node svg { width: 19px; height: 19px; }
.node.root { gap: 4px; padding-left: 3px; }
.part { letter-spacing: 0.06px; }
.has::before { content: ""; position: absolute; left: 9px; top: 8px; border: 4px solid transparent; border-left: 5px solid #555; border-right: 0; }
.fa { font: 700 14px "Liberation Serif", serif; fill: #2a7ca8; text-anchor: middle; }
.endbar { height: 4px; margin-right: 2px; background: #338fc6; }

.viewport { position: relative; flex: 1; border-left: 1px solid #808080; background: #fff; overflow: hidden; }
.scene { position: absolute; left: 0; top: 0; width: 774px; height: 824px; }
.hud { position: relative; display: flex; align-items: center; height: 30px; padding-left: 305px; }
.vc { display: flex; justify-content: center; width: 26px; opacity: 0.85; }
.va { display: flex; justify-content: center; width: 14px; padding-right: 1px; }
.handle { position: absolute; left: -1px; top: 447px; width: 12px; height: 49px; display: flex; align-items: center; justify-content: center; padding-right: 2px; border: 1px solid #999; border-left: 0; background: #f7f7f7; }
.callout { position: absolute; left: 162px; top: 153px; width: 237px; height: 63px; display: grid; grid-template-columns: 50px 113px 74px; grid-template-rows: 33px 28px; border-top: 1px solid #808080; border-bottom: 1px solid #808080; background: #fff; color: #333; font-size: 12px; line-height: 33px; letter-spacing: -0.1px; }
.callout span { height: 100%; padding-left: 4px; border-right: 1px solid #808080; white-space: nowrap; }
.callout span:nth-child(n+4) { line-height: 29px; }
.callout .k { background: #f7f7f7; letter-spacing: 0; }
.callout .alt { color: #0000e6; }
```
